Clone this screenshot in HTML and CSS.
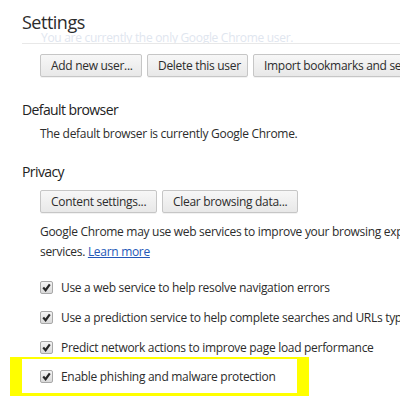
FILE: index.html
```html
<!DOCTYPE html>
<html>
<head>
<meta charset="utf-8">
<link rel="stylesheet" href="styles.css">
</head>
<body>
<div class="header">
  <h1 class="title">Settings</h1>
  <div class="faded">You are currently the only Google Chrome user.</div>
</div>
<div class="content">
  <div class="section first">
    <div class="buttons">
      <button class="btn w1">Add new user...</button>
      <button class="btn w2">Delete this user</button>
      <button class="btn w3">Import bookmarks and settings...</button>
    </div>
  </div>
  <div class="section s2">
    <h2 class="heading">Default browser</h2>
    <div class="body">
      <p class="text">The default browser is currently Google Chrome.</p>
    </div>
  </div>
  <div class="section s3">
    <h2 class="heading">Privacy</h2>
    <div class="body">
      <div class="buttons">
        <button class="btn w4">Content settings...</button>
        <button class="btn w5">Clear browsing data...</button>
      </div>
      <p class="para">Google Chrome may use web services to improve your browsing experience. You may optionally disable these<br>services. <a href="#" class="link">Learn more</a></p>
      <div class="checks">
        <label class="check"><span class="box"><svg viewBox="0 0 11 11" width="11" height="11"><path d="M2.2 5.6 L4.6 8.2 L8.8 2.4" fill="none" stroke="#262626" stroke-width="2.2"/></svg></span>Use a web service to help resolve navigation errors</label>
        <label class="check"><span class="box"><svg viewBox="0 0 11 11" width="11" height="11"><path d="M2.2 5.6 L4.6 8.2 L8.8 2.4" fill="none" stroke="#262626" stroke-width="2.2"/></svg></span>Use a prediction service to help complete searches and URLs typed in the address bar</label>
        <label class="check"><span class="box"><svg viewBox="0 0 11 11" width="11" height="11"><path d="M2.2 5.6 L4.6 8.2 L8.8 2.4" fill="none" stroke="#262626" stroke-width="2.2"/></svg></span>Predict network actions to improve page load performance</label>
      </div>
      <div class="highlight">
        <label class="check hl"><span class="box"><svg viewBox="0 0 11 11" width="11" height="11"><path d="M2.2 5.6 L4.6 8.2 L8.8 2.4" fill="none" stroke="#262626" stroke-width="2.2"/></svg></span>Enable phishing and malware protection</label>
      </div>
    </div>
  </div>
</div>
</body>
</html>
```
FILE: styles.css
```css
html, body {
  margin: 0;
  padding: 0;
  background: #fff;
  overflow: hidden;
  width: 400px;
  height: 400px;
}
body {
  font-family: "Open Sans", "Noto Sans", sans-serif;
  color: #2c2c2c;
  font-size: 12px;
  letter-spacing: -0.3px;
}
.header {
  height: 43px;
  margin-left: 22px;
  border-bottom: 1px solid #e8e8e8;
  overflow: hidden;
}
.title {
  margin: 0;
  padding-top: 11px;
  font-size: 18px;
  font-weight: normal;
  line-height: 22px;
  letter-spacing: -0.5px;
  color: #2c2c2c;
}
.faded {
  margin-left: 19px;
  line-height: 10px;
  color: #dfe6ef;
  white-space: nowrap;
}
.content {
  padding-left: 22px;
}
.section.first {
  margin-top: 10px;
  padding-left: 18px;
}
.section.s2 {
  margin-top: 23px;
}
.section.s3 {
  margin-top: 20px;
}
.heading {
  margin: 0;
  font-size: 14px;
  font-weight: normal;
  line-height: 20px;
  letter-spacing: -0.6px;
  color: #222;
}
.body {
  padding-left: 18px;
  white-space: nowrap;
}
.text {
  margin: 6px 0 0;
  line-height: 16px;
}
.buttons {
  display: flex;
  gap: 5px;
  white-space: nowrap;
}
.body .buttons {
  margin-top: 8px;
}
.btn {
  font-family: inherit;
  font-size: 12px;
  letter-spacing: -0.3px;
  color: #2c2c2c;
  height: 23px;
  padding: 0 10px;
  border: 1px solid #c6c6c6;
  border-radius: 2px;
  background: linear-gradient(#f7f7f7, #e8e8e8);
  box-shadow: 0 1px 0 rgba(0,0,0,0.05);
  flex: none;
  text-align: center;
}
.w1 { width: 102px; }
.w2 { width: 101px; }
.w4 { width: 117px; }
.w5 { width: 136px; }
.para {
  margin: 9px 0 0;
  line-height: 20px;
  white-space: nowrap;
}
.link {
  color: #2357b7;
  text-decoration: underline;
}
.checks {
  margin-top: 10px;
}
.check {
  display: flex;
  align-items: center;
  gap: 8px;
  height: 30px;
  white-space: nowrap;
}
.box {
  width: 13px;
  height: 13px;
  border: 1px solid #a8a8a8;
  border-radius: 2px;
  box-sizing: border-box;
  background: linear-gradient(#f4f4f4, #d9d9d9);
  display: flex;
  align-items: center;
  justify-content: center;
  flex: none;
}
.box svg {
  display: block;
}
.highlight {
  margin-top: -5px;
  margin-left: -30px;
  width: 299px;
  height: 39px;
  box-sizing: border-box;
  border-style: solid;
  border-color: #ffff00;
  border-width: 2px 12px 3px 12px;
  padding-left: 18px;
  display: flex;
  align-items: center;
}
.check.hl {
  height: auto;
}
```
